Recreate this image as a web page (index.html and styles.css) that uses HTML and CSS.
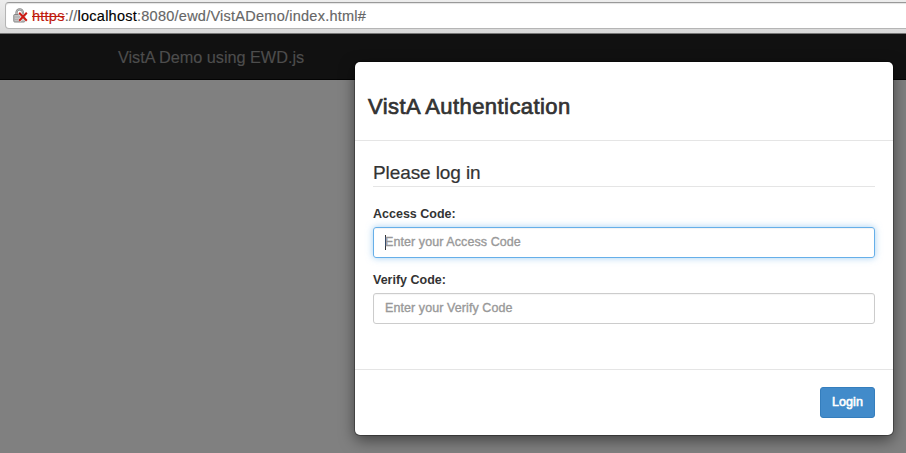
FILE: index.html
```html
<!DOCTYPE html>
<html lang="en">
<head>
<meta charset="utf-8">
<title>VistA Demo using EWD.js</title>
<link rel="stylesheet" href="styles.css">
</head>
<body>
<div class="toolbar">
  <div class="address">
    <svg class="lock" width="16" height="16" viewBox="0 0 16 16">
      <path d="M3.5 7V4.5a3.2 3.2 0 0 1 6.4 0V7" fill="none" stroke="#858585" stroke-width="2.2"/>
      <path d="M3.5 7V4.5a3.2 3.2 0 0 1 6.4 0V7" fill="none" stroke="#cfcfcf" stroke-width=".7"/>
      <rect x=".8" y="6.5" width="11" height="7.5" rx=".8" fill="#c4c4c4" stroke="#858585"/>
      <path d="M1.5 9h9M1.5 11.5h9" stroke="#adadad"/>
      <path d="M6.2 4.8l7.6 8M13.8 4.8l-7.6 8" stroke="#fff" stroke-width="3.4" opacity=".6"/>
      <path d="M6.2 4.8l7.6 8M13.8 4.8l-7.6 8" stroke="#cc1b14" stroke-width="2"/>
    </svg>
    <span class="url"><span class="scheme">https</span>://<span class="host">localhost</span>:8080/ewd/VistADemo/index.html#</span>
  </div>
</div>
<div class="page">
  <nav class="navbar"><span class="brand">VistA Demo using EWD.js</span></nav>
  <form class="modal">
    <header class="modal-header"><h2 class="modal-title">VistA Authentication</h2></header>
    <div class="modal-body">
      <h3 class="legend">Please log in</h3>
      <label class="label">Access Code:</label>
      <div class="input focused"><span class="caret"></span><span class="placeholder">Enter your Access Code</span></div>
      <label class="label">Verify Code:</label>
      <div class="input"><span class="placeholder">Enter your Verify Code</span></div>
    </div>
    <footer class="modal-footer"><button class="login" type="button">Login</button></footer>
  </form>
</div>
</body>
</html>
```
FILE: styles.css
```css
* { box-sizing: border-box; }
body {
  margin: 0;
  height: 453px;
  overflow: hidden;
  display: flex;
  flex-direction: column;
  font-family: "Liberation Sans", Arial, sans-serif;
  color: #333;
  background: #808080;
}
.toolbar {
  height: 34px;
  flex: none;
  padding: 2px 0 0 5px;
  background: linear-gradient(#ededed, #d9d9d9);
  border-bottom: 1px solid #777;
}
.address {
  height: 27px;
  width: 920px;
  display: flex;
  align-items: center;
  padding-left: 7px;
  background: #fff;
  border: 1px solid #b5b5b5;
  border-top-color: #999;
  border-radius: 4px;
  box-shadow: inset 0 1px 1px #e4e4e4;
}
.lock { flex: none; margin-right: 3px; }
.url { font-size: 14.5px; letter-spacing: .25px; line-height: 20px; color: #666; white-space: nowrap; -webkit-text-stroke: .15px; }
.scheme { color: #c01a0c; text-decoration: line-through; }
.host { color: #000; }
.page { flex: 1; position: relative; }
.navbar {
  height: 46px;
  padding: 2px 0 0 118px;
  background: #111;
  border-bottom: 1px solid #040404;
  display: flex;
  align-items: center;
}
.brand { font-size: 16.3px; letter-spacing: -.04px; color: #4d4d4d; -webkit-text-stroke: .15px; }
.modal {
  position: absolute;
  left: 355px;
  top: 28px;
  width: 538px;
  height: 373px;
  display: flex;
  flex-direction: column;
  background: #fff;
  border-radius: 5px;
  box-shadow: 0 0 0 1px rgba(0,0,0,.3), 0 5px 15px rgba(0,0,0,.5);
}
.modal-header {
  height: 79px;
  padding: 32px 13px 0;
  border-bottom: 1px solid #e5e5e5;
}
.modal-title { margin: 0; font-size: 22px; letter-spacing: .43px; line-height: 26px; font-weight: 400; -webkit-text-stroke: .7px #333; }
.modal-body { height: 228px; padding: 20px 18px 0; }
.legend {
  height: 26px;
  margin: 0 0 20px;
  font-size: 19px;
  letter-spacing: -.1px;
  line-height: 24px;
  font-weight: 400;
  border-bottom: 1px solid #e5e5e5;
  -webkit-text-stroke: .2px;
}
.label { display: block; height: 20px; font-size: 12.5px; line-height: 14px; font-weight: 700; }
.input {
  height: 31px;
  margin-bottom: 15px;
  padding: 0 11px;
  display: flex;
  align-items: center;
  border: 1px solid #ccc;
  border-radius: 3px;
  font-size: 12.5px;
  color: #999;
  box-shadow: inset 0 1px 1px rgba(0,0,0,.04);
}
.focused { border-color: #66afe9; box-shadow: inset 0 1px 1px rgba(0,0,0,.05), 0 0 7px rgba(102,175,233,.6); }
.caret { width: 1px; height: 15px; margin-right: -1px; background: #333; }
.placeholder { padding-bottom: 2px; letter-spacing: .08px; -webkit-text-stroke: .35px #999; }
.modal-footer {
  flex: 1;
  display: flex;
  justify-content: flex-end;
  align-items: flex-start;
  padding: 17px 18px 0;
  border-top: 1px solid #e5e5e5;
}
.login {
  width: 55px;
  height: 31px;
  padding: 0 0 2px;
  font: 400 12.5px "Liberation Sans", Arial, sans-serif;
  letter-spacing: .1px;
  color: #fff;
  -webkit-text-stroke: .6px #fff;
  background: #428bca;
  border: 1px solid #357ebd;
  border-radius: 3px;
}
```
